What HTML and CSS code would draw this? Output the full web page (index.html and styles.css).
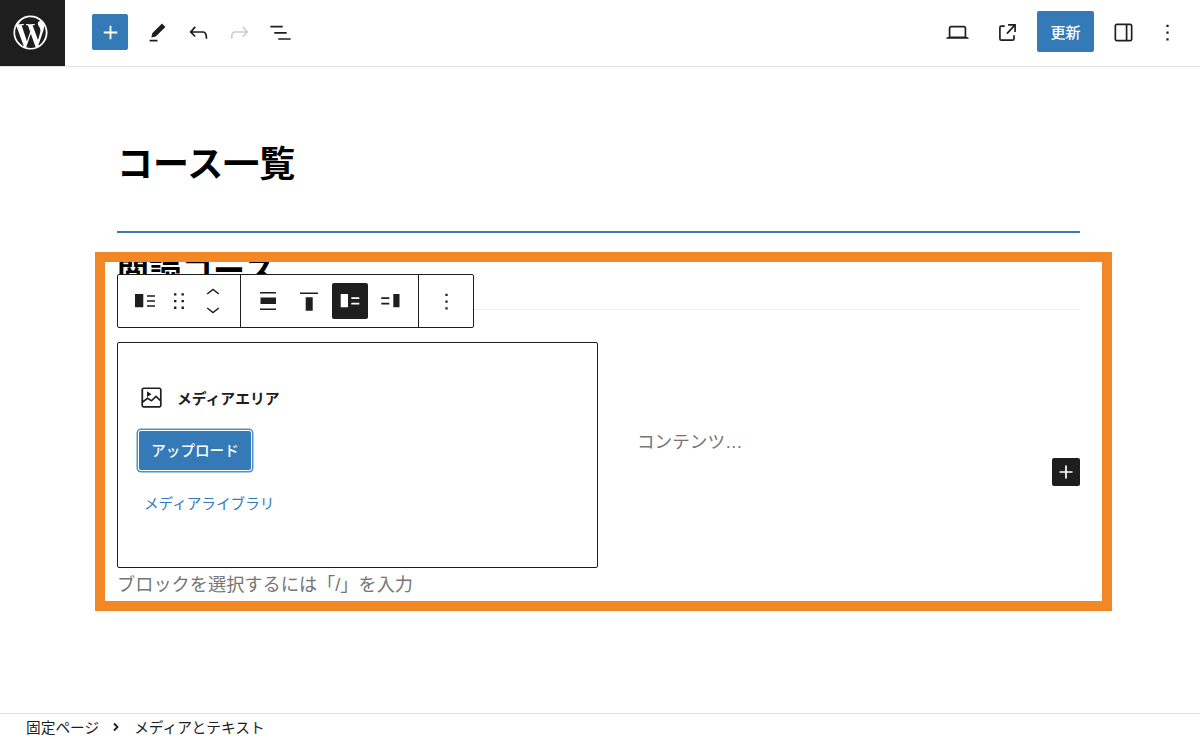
FILE: index.html
```html
<!DOCTYPE html>
<html lang="ja">
<head>
    <meta charset="UTF-8">
    <title>コース一覧</title>
    <link rel="stylesheet" href="styles.css">
</head>
<body>

<div class="topbar">
    <div class="wp-logo">
        <svg width="41" height="41" viewBox="0 0 24 24" fill="#fff"><path d="M12 2C6.500 2 2 6.500 2 12s4.500 10 10 10 10-4.500 10-10S17.500 2 12 2zM3 12c0-1.300.3-2.500.8-3.700l4.300 11.700C5.100 18.600 3 15.500 3 12zm9 9c-.9 0-1.700-.1-2.500-.4l2.700-7.800 2.700 7.600c0 .1 0 .1.100.2-.9.300-1.900.4-3 .4zm1.200-13.200c.5 0 1-.1 1-.1.500-.1.400-.8-.1-.7 0 0-1.400.1-2.200.1-.8 0-2.200-.1-2.200-.1-.5 0-.5.700-.1.700 0 0 .4.100.9.100l1.300 3.700-1.900 5.600-3.100-9.300c.5 0 1-.1 1-.1.500-.1.400-.8-.1-.7 0 0-1.400.1-2.300.1h-.5C6.500 4.400 9.100 3 12 3c2.200 0 4.300.8 5.800 2.200h-.1c-.8 0-1.400.7-1.400 1.500 0 .7.400 1.300.8 2 .3.600.7 1.300.7 2.300 0 .7-.3 1.500-.6 2.700l-.8 2.700-3.200-8.600zm3.300 12l2.700-7.900c.5-1.300.7-2.300.7-3.200 0-.3 0-.6-.1-.9.700 1.300 1.100 2.700 1.100 4.200 0 3.300-1.800 6.200-4.400 7.800z"/></svg>
    </div>
    <div class="tools-left">
        <button class="add-btn">
            <svg width="27" height="27" viewBox="0 0 24 24" fill="#fff"><path d="M18 11.200h-5.200V6h-1.600v5.200H6v1.600h5.200V18h1.600v-5.200H18z"/></svg>
        </button>
        <span class="tool">
            <svg viewBox="0 0 24 24" fill="#1e1e1e"><path d="M19 7l-3-3-8.500 8.500-1 4 4-1L19 7zm-7 11.500H5V20h7v-1.500z"/></svg>
        </span>
        <span class="tool">
            <svg viewBox="0 0 24 24" fill="#1e1e1e"><path d="M18.300 11.700c-.6-.6-1.400-.9-2.300-.9H6.700l2.900-3.300-1.100-1-4.500 5L8.500 16l1-1-2.700-2.700H16c.5 0 .9.200 1.300.5 1 1 1 3.400 1 4.500v.3h1.500v-.2c0-1.500 0-4.300-1.500-5.700z"/></svg>
        </span>
        <span class="tool">
            <svg viewBox="0 0 24 24" fill="#cccccc"><path d="M15.600 6.500l-1.100 1 2.900 3.300H8c-.9 0-1.700.3-2.300.9-1.400 1.500-1.400 4.200-1.400 5.600v.2h1.500v-.3c0-1.100 0-3.500 1-4.500.3-.3.700-.5 1.300-.5h9.200L14.300 15l1.100 1.100 4.500-4.500-4.300-5.100z"/></svg>
        </span>
        <span class="tool">
            <svg viewBox="0 0 24 24" fill="#1e1e1e"><path d="M3 6h11v1.500H3V6zm3.500 5.500h11V13h-11v-1.500zM21 17H10v1.500h11V17z"/></svg>
        </span>
    </div>
    <div class="tools-right">
        <span class="tool">
            <svg viewBox="0 0 24 24" fill="#1e1e1e"><path d="M20.500 16h-.7V8c0-1.100-.9-2-2-2H6.200c-1.100 0-2 .9-2 2v8h-.7c-.8 0-1.500.7-1.500 1.500h20c0-.8-.7-1.500-1.500-1.500zM5.700 8c0-.3.200-.5.500-.5h11.600c.3 0 .5.200.5.500v7.600H5.700V8z"/></svg>
        </span>
        <span class="tool">
            <svg viewBox="0 0 24 24" fill="#1e1e1e"><path d="M19.500 4.500h-7V6h4.440l-5.970 6.440 1.100 1.020L18 7.030v4.470h1.500v-7zm-13 1a2 2 0 0 0-2 2v10a2 2 0 0 0 2 2h10a2 2 0 0 0 2-2v-3H17v3a.5.5 0 0 1-.5.5h-10a.5.5 0 0 1-.5-.5v-10a.5.5 0 0 1 .5-.5h3V5.500h-3z"/></svg>
        </span>
        <button class="update-btn">更新</button>
        <span class="tool tool-panel">
            <svg viewBox="0 0 24 24" fill="#1e1e1e"><path d="M18 4H6c-1.100 0-2 .9-2 2v12c0 1.100.9 2 2 2h12c1.100 0 2-.9 2-2V6c0-1.100-.9-2-2-2zM5.500 18V6c0-.3.200-.5.500-.5h8v13H6c-.3 0-.5-.2-.5-.5zm13 0c0 .3-.2.500-.5.500h-2.500v-13H18c.3 0 .5.200.5.500v12z"/></svg>
        </span>
        <span class="tool tool-more">
            <svg viewBox="0 0 24 24" fill="#1e1e1e"><path d="M13 19h-2v-2h2v2zm0-6h-2v-2h2v2zm0-6h-2V5h2v2z"/></svg>
        </span>
    </div>
</div>

<div class="editor">
    <h1 class="page-title">コース一覧</h1>
    <hr class="title-rule">
    <h2 class="section-title">閲読コース</h2>
    <hr class="section-rule">

    <div class="media-text">
        <div class="placeholder">
            <div class="placeholder-label">
                <svg width="27" height="27" viewBox="0 0 24 24" fill="#1e1e1e"><path d="M19 3H5c-1.100 0-2 .9-2 2v14c0 1.100.9 2 2 2h14c1.100 0 2-.9 2-2V5c0-1.100-.9-2-2-2zM5 4.500h14c.3 0 .5.200.5.500v8.400l-3-2.900c-.3-.3-.8-.3-1 0L11.900 14 9 12c-.3-.2-.6-.2-.8 0l-3.600 2.600V5c-.1-.3.100-.5.400-.5zm14 15H5c-.3 0-.5-.2-.5-.5v-2.400l4.100-3 3 1.900c.3.200.7.200.9-.1L16 12l3.500 3.400V19c0 .3-.2.500-.5.500z"/><path d="M8 6.500v5l4-2.500z"/></svg>
                <span>メディアエリア</span>
            </div>
            <button class="upload-btn">アップロード</button>
            <a class="library-link">メディアライブラリ</a>
        </div>
        <div class="media-content">コンテンツ…</div>
    </div>
    <p class="hint">ブロックを選択するには「/」を入力</p>

    <button class="inserter">
        <svg width="26" height="26" viewBox="0 0 24 24" fill="#fff"><path d="M18 11.200h-5.200V6h-1.600v5.200H6v1.600h5.200V18h1.600v-5.200H18z"/></svg>
    </button>

    <div class="block-toolbar">
        <div class="tb-group tb-first">
            <span class="tb-btn tb-narrow">
                <svg width="24" height="24" viewBox="0 0 24 24" fill="#1e1e1e"><path d="M2 5h8.300v13.300H2zM14 6.300h8v1.400h-8zM14 11.300h8v1.400h-8zM14 16.300h8v1.400h-8z"/></svg>
            </span>
            <span class="tb-btn tb-narrow">
                <svg width="24" height="24" viewBox="0 0 24 24" fill="#1e1e1e"><path d="M7 4.200h2.400v2.300H7zM14.500 4.200h2.400v2.300h-2.400zM7 10.900h2.400v2.300H7zM14.500 10.900h2.400v2.300h-2.400zM7 17.600h2.400v2.300H7zM14.500 17.600h2.400v2.300h-2.400z"/></svg>
            </span>
            <span class="tb-mover">
                <svg width="24" height="18" viewBox="0 0 24 18" fill="none" stroke="#1e1e1e" stroke-width="1.500"><path d="M6.200 11L12 6.500 17.800 11"/></svg>
                <svg width="24" height="18" viewBox="0 0 24 18" fill="none" stroke="#1e1e1e" stroke-width="1.500"><path d="M6.200 7L12 11.500 17.800 7"/></svg>
            </span>
        </div>
        <div class="tb-group tb-second">
            <span class="tb-btn">
                <svg width="24" height="24" viewBox="0 0 24 24" fill="#1e1e1e"><path d="M4 3h16v1.500H4zM4.500 8.500h15.500V15H4.500zM4 19.500h16V21H4z"/></svg>
            </span>
            <span class="tb-btn">
                <svg width="24" height="24" viewBox="0 0 24 24" fill="#1e1e1e"><path d="M3 3.500h18V5H3zM8.700 8.300h7v13.400h-7z"/></svg>
            </span>
            <span class="tb-btn active">
                <svg width="24" height="24" viewBox="0 0 24 24" fill="#fff"><path d="M2.700 5H10v13.300H2.700zM13.300 8.300h8V10h-8zM13.300 13.700h8v1.700h-8z"/></svg>
            </span>
            <span class="tb-btn">
                <svg width="24" height="24" viewBox="0 0 24 24" fill="#1e1e1e"><path d="M14.300 5h6.200v13.300h-6.200zM2.300 8.300h8V10h-8zM2.300 13.700h8v1.700h-8z"/></svg>
            </span>
        </div>
        <div class="tb-group tb-third">
            <span class="tb-btn">
                <svg width="27" height="27" viewBox="0 0 24 24" fill="#1e1e1e"><path d="M13 19h-2v-2h2v2zm0-6h-2v-2h2v2zm0-6h-2V5h2v2z"/></svg>
            </span>
        </div>
    </div>

    <div class="highlight-frame"></div>
</div>

<div class="breadcrumb">
    <span>固定ページ</span>
    <svg width="24" height="24" viewBox="0 0 24 24" fill="none" stroke="#1e1e1e" stroke-width="1.800"><path d="M10 8.500l3.500 3.500-3.500 3.500"/></svg>
    <span>メディアとテキスト</span>
</div>

</body>
</html>
```

FILE: styles.css
```css
* {
    box-sizing: border-box;
}

html, body {
    height: 100%;
}

body {
    font-family: "Liberation Sans", "Noto Sans CJK JP", sans-serif;
    margin: 0;
    background-color: #fff;
    color: #1e1e1e;
    display: flex;
    flex-direction: column;
    overflow: hidden;
}

button {
    font-family: inherit;
    border: none;
    padding: 0;
}

/* top bar */
.topbar {
    height: 67px;
    flex: none;
    display: flex;
    align-items: center;
    padding-bottom: 2px;
    border-bottom: 1px solid #e0e0e0;
}

.wp-logo {
    width: 65px;
    height: 66px;
    align-self: flex-start;
    padding: 0 4px 1px 0;
    background-color: #1e1e1e;
    display: flex;
    align-items: center;
    justify-content: center;
}

.tools-left {
    display: flex;
    align-items: center;
    margin-left: 27px;
    flex: 1;
}

.tool {
    width: 24px;
    height: 24px;
    display: block;
}

.tool svg {
    display: block;
    width: 27px;
    height: 27px;
    margin: -1.5px;
}

.tools-left .tool {
    margin-left: 17px;
}

.add-btn {
    width: 36px;
    height: 36px;
    background-color: #337ab7;
    border-radius: 2px;
    display: flex;
    align-items: center;
    justify-content: center;
}

.tools-right {
    display: flex;
    align-items: center;
    margin-right: 21px;
}

.tools-right .tool {
    margin-left: 26px;
}

.tools-right .tool-panel {
    margin-left: 25px;
}

.tools-right .tool-more {
    margin-left: 20px;
}

.update-btn {
    width: 57px;
    height: 41px;
    margin: 0 -8px 1px 18px;
    padding-bottom: 1px;
    background-color: #337ab7;
    color: #fff;
    border-radius: 2px;
    font-size: 15px;
    font-weight: 500;
}

/* editor canvas */
.editor {
    flex: 1;
    position: relative;
    padding: 0 120px 0 117px;
}

.page-title {
    margin: 76px 0 0;
    font-size: 36px;
    line-height: 44px;
    font-weight: 700;
    color: #000;
}

.title-rule {
    margin: 44px 0 0;
    border: none;
    height: 2px;
    background-color: #3f7ab6;
}

.section-title {
    margin: 19px 0 0;
    font-size: 32px;
    line-height: 38px;
    font-weight: 700;
    color: #000;
}

.section-rule {
    margin: 19px 0 0;
    border: none;
    height: 1px;
    background-color: #ececec;
}

.media-text {
    display: flex;
    align-items: center;
    margin-top: 32px;
}

.placeholder {
    width: 481px;
    height: 226px;
    border: 1px solid #1e1e1e;
    border-radius: 2px;
    padding: 42px 19px 0;
    flex: none;
}

.placeholder-label {
    display: flex;
    align-items: center;
    gap: 14px;
    margin-left: 2px;
    font-size: 14.8px;
    font-weight: 700;
    height: 24px;
}

.placeholder-label svg {
    margin: -1.5px;
}

.upload-btn {
    display: block;
    width: 112px;
    height: 39px;
    margin: 22px 0 0 2px;
    padding-bottom: 2px;
    background-color: #337ab7;
    color: #fff;
    font-size: 14.6px;
    font-weight: 500;
    border-radius: 2px;
    box-shadow: 0 0 0 1px #fff, 0 0 0 2.5px #4a90ca;
}

.library-link {
    display: block;
    margin: 24px 0 0 7px;
    font-size: 14.6px;
    line-height: 20px;
    color: #337ab7;
}

.media-content {
    margin-left: 39px;
    margin-top: -30px;
    font-size: 17.6px;
    color: #757575;
}

.hint {
    margin: 4px 0 0;
    font-size: 18.2px;
    line-height: 26px;
    color: #757575;
}

.inserter {
    position: absolute;
    left: 1052px;
    top: 391px;
    width: 28px;
    height: 28px;
    padding-right: 1px;
    padding-bottom: 1px;
    background-color: #1e1e1e;
    border-radius: 2px;
    display: flex;
    align-items: center;
    justify-content: center;
}

/* block toolbar, floats over the heading */
.block-toolbar {
    position: absolute;
    left: 117px;
    top: 207px;
    height: 54px;
    display: flex;
    background-color: #fff;
    border: 1px solid #1e1e1e;
    border-radius: 2px;
}

.tb-group {
    display: flex;
    align-items: center;
    border-left: 1px solid #1e1e1e;
}

.tb-first {
    border-left: none;
    width: 122px;
    padding-left: 15px;
}

.tb-second {
    width: 178px;
    padding-left: 9px;
    gap: 5px;
}

.tb-third {
    width: 55px;
    padding-left: 9px;
}

.tb-btn {
    width: 36px;
    height: 36px;
    display: flex;
    align-items: center;
    justify-content: center;
    border-radius: 2px;
}

.tb-narrow {
    width: 24px;
    margin-right: 10px;
}

.tb-mover {
    display: flex;
    flex-direction: column;
}

.tb-btn.active {
    background-color: #1e1e1e;
}

/* orange annotation drawn on top of the shot */
.highlight-frame {
    position: absolute;
    left: 95px;
    top: 185px;
    width: 1017px;
    height: 359px;
    border: 10px solid #f28825;
    pointer-events: none;
}

/* footer breadcrumb */
.breadcrumb {
    height: 26px;
    flex: none;
    border-top: 1px solid #e0e0e0;
    display: flex;
    align-items: center;
    padding-left: 26px;
    font-size: 14.7px;
}

.breadcrumb svg {
    margin: 0 6px 0 5px;
}
```
